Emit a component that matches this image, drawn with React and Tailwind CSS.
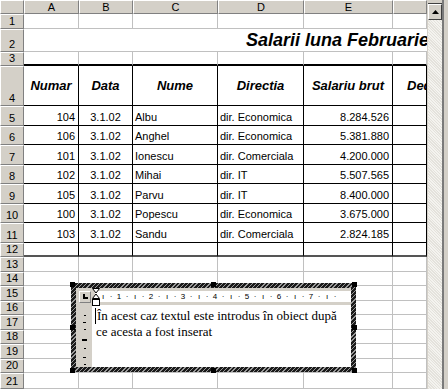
import React from 'react'

const colW = ['w-[55px]', 'w-[54px]', 'w-[85px]', 'w-[86px]', 'w-[89px]', 'w-[34px]']
const colLetters = ['A', 'B', 'C', 'D', 'E', '']

const rowH = [
  'h-[15px]', 'h-[23px]', 'h-[14px]', 'h-[40px]',
  'h-[20px]', 'h-[19px]', 'h-[20px]', 'h-[19px]', 'h-[20px]', 'h-[19px]', 'h-[20px]',
  'h-[14px]',
  'h-[15px]', 'h-[14px]', 'h-[15px]', 'h-[14px]', 'h-[15px]', 'h-[14px]', 'h-[15px]', 'h-[14px]', 'h-[16px]',
]

const heads = ['Numar', 'Data', 'Nume', 'Directia', 'Salariu brut', 'Deduceri']

const data = [
  ['104', '3.1.02', 'Albu', 'dir. Economica', '8.284.526'],
  ['106', '3.1.02', 'Anghel', 'dir. Economica', '5.381.880'],
  ['101', '3.1.02', 'Ionescu', 'dir. Comerciala', '4.200.000'],
  ['102', '3.1.02', 'Mihai', 'dir. IT', '5.507.565'],
  ['105', '3.1.02', 'Parvu', 'dir. IT', '8.400.000'],
  ['100', '3.1.02', 'Popescu', 'dir. Economica', '3.675.000'],
  ['103', '3.1.02', 'Sandu', 'dir. Comerciala', '2.824.185'],
]

const align = ['justify-end pr-[3px]', 'justify-center', 'justify-start pl-[2px]', 'justify-start pl-[2px]', 'justify-end pr-[3px]', '']

const RowHead = ({ n, h }) => (
  <div className={`w-[24px] ${h} shrink-0 bg-[#d4d0c8] border-t border-l border-t-white border-l-white border-b border-r border-b-[#808080] border-r-[#808080] flex items-end justify-center pb-[1px] text-[11px] leading-none text-black`}>
    {n}
  </div>
)

const Ruler = () => {
  const marks = []
  for (let i = 1; i <= 31; i++) {
    let t = '·'
    if (i % 4 === 0) t = String(i / 4)
    else if (i % 2 === 0) t = 'ı'
    marks.push(
      <span key={i} className="w-[8px] shrink-0 text-center text-[8px] leading-none text-black">{t}</span>
    )
  }
  return <div className="flex -ml-[4px]">{marks}</div>
}

const Handle = ({ pos }) => <div className={`absolute w-[5px] h-[5px] bg-black ${pos}`} />

const TextObject = () => (
  <div className="absolute left-[71px] top-[283px] w-[285px] h-[89px] p-[5px] bg-[repeating-linear-gradient(135deg,#1a1a1a_0px,#1a1a1a_2px,#9a9a9a_2px,#9a9a9a_3px)]">
    <Handle pos="-left-[1px] -top-[1px]" />
    <Handle pos="left-[140px] -top-[1px]" />
    <Handle pos="-right-[1px] -top-[1px]" />
    <Handle pos="-left-[1px] top-[42px]" />
    <Handle pos="-right-[1px] top-[42px]" />
    <Handle pos="-left-[1px] -bottom-[1px]" />
    <Handle pos="left-[140px] -bottom-[1px]" />
    <Handle pos="-right-[1px] -bottom-[1px]" />

    <div className="w-full h-full bg-[#d4d0c8] flex flex-col overflow-hidden">
      <div className="h-[17px] flex items-center relative shrink-0">
        <div className="w-[12px] h-[12px] ml-[3px] border border-t-white border-l-white border-b-[#808080] border-r-[#808080] flex items-center justify-center">
          <div className="w-[5px] h-[5px] border-l-2 border-b-2 border-black" />
        </div>
        <div className="ml-[4px] h-[11px] flex-1 bg-white flex items-center">
          <Ruler />
        </div>
        {/* indent marker */}
        <svg className="absolute left-[16px] top-0" width="8" height="19" viewBox="0 0 8 19">
          <path d="M0.5 0.5 H7.5 L4 5 Z" fill="#fff" stroke="#000" />
          <path d="M4 6 L0.5 10.5 H7.5 Z" fill="#fff" stroke="#000" />
          <rect x="0.5" y="11.5" width="7" height="6" fill="#fff" stroke="#000" />
        </svg>
      </div>
      <div className="flex flex-1">
        <div className="w-[15px] ml-[1px] shrink-0 flex flex-col items-center pt-[10px] gap-[6px]">
          <div className="w-[2px] h-[1px] bg-black" />
          <div className="w-[3px] h-[1px] bg-black" />
          <div className="w-[2px] h-[1px] bg-black" />
          <div className="w-[5px] h-[2px] bg-black mt-[3px]" />
          <div className="w-[2px] h-[1px] bg-black mt-[1px]" />
          <div className="w-[3px] h-[1px] bg-black mt-[2px]" />
          <div className="w-[2px] h-[1px] bg-black" />
        </div>
        <div className="flex-1 bg-white pl-[4px] pt-[3px] font-['Liberation_Serif',serif] text-[13px] leading-[16px] text-black">
          <p className="-ml-[1px] pl-[1px] border-l border-black w-fit">În acest caz textul este introdus în obiect după</p>
          <p>ce acesta a fost inserat</p>
        </div>
      </div>
    </div>
  </div>
)

const ScrollBar = () => (
  <div className="w-[21px] h-[389px] bg-[#d4d0c8] flex shrink-0">
    <div className="w-[14px] ml-[1px] mt-[3px] flex flex-col bg-[#e9e7e2] border-t border-[#404040]">
      <div className="h-[16px] bg-[#d4d0c8] border border-t-white border-l-white border-b-[#404040] border-r-[#404040] flex items-center justify-center">
        <svg width="7" height="4" viewBox="0 0 7 4"><path d="M3.5 0 L7 4 H0 Z" fill="#000" /></svg>
      </div>
      <div className="flex-1 bg-[repeating-linear-gradient(45deg,#e4e2dc_0px,#e4e2dc_1px,#f4f3ef_1px,#f4f3ef_2px)]" />
    </div>
    <div className="w-[2px] bg-[#7a7a7a]" />
    <div className="w-[4px] bg-[#d4d0c8]" />
  </div>
)

export default function App() {
  const rows = []
  for (let r = 1; r <= 21; r++) {
    const h = rowH[r - 1]
    let cells
    if (r === 2) {
      cells = (
        <div className={`w-[403px] ${h} border-b border-[#c0c0c0] flex items-center pl-[222px] overflow-hidden whitespace-nowrap text-[18px] font-bold italic text-black`}>
          Salarii luna Februarie
        </div>
      )
    } else {
      cells = colW.map((w, c) => {
        let cls = 'border-r border-b border-[#c0c0c0]'
        let content = null
        let box = 'items-end pb-[2px]'
        if (r === 3) cls = 'border-r border-[#c0c0c0] border-b-2 border-b-black'
        if (r >= 4 && r <= 12) cls = 'border-r border-b border-black'
        if (r === 12) cls = 'border-r border-black border-b-2 border-b-[#555]'
        if (r === 4) {
          content = heads[c]
          box = `items-center text-[13px] font-bold italic ${c === 5 ? 'justify-start pl-[14px]' : 'justify-center'}`
        } else if (r >= 5 && r <= 11 && c < 5) {
          content = data[r - 5][c]
          box = `items-end pb-[2px] ${align[c]}`
        }
        return (
          <div key={c} className={`${w} ${h} shrink-0 ${cls} flex ${box} overflow-hidden whitespace-nowrap text-black`}>
            {content}
          </div>
        )
      })
    }
    rows.push(
      <div key={r} className="flex">
        <RowHead n={r} h={h} />
        {cells}
      </div>
    )
  }

  return (
    <div className="w-[448px] h-[389px] overflow-hidden bg-white flex font-['Liberation_Sans',Arial,sans-serif] text-[11px] leading-none">
      <div className="w-[427px] relative shrink-0">
        <div className="flex h-[14px]">
          <div className="w-[24px] h-[14px] bg-[#d4d0c8] border border-t-white border-l-white border-b-[#808080] border-r-[#808080]" />
          {colW.map((w, i) => (
            <div key={i} className={`${w} h-[14px] shrink-0 bg-[#d4d0c8] border-t border-l border-t-white border-l-white border-b border-r border-b-[#808080] border-r-[#808080] flex items-center justify-center text-[11px] text-black`}>
              {colLetters[i]}
            </div>
          ))}
        </div>
        {rows}
        <TextObject />
      </div>
      <ScrollBar />
    </div>
  )
}
